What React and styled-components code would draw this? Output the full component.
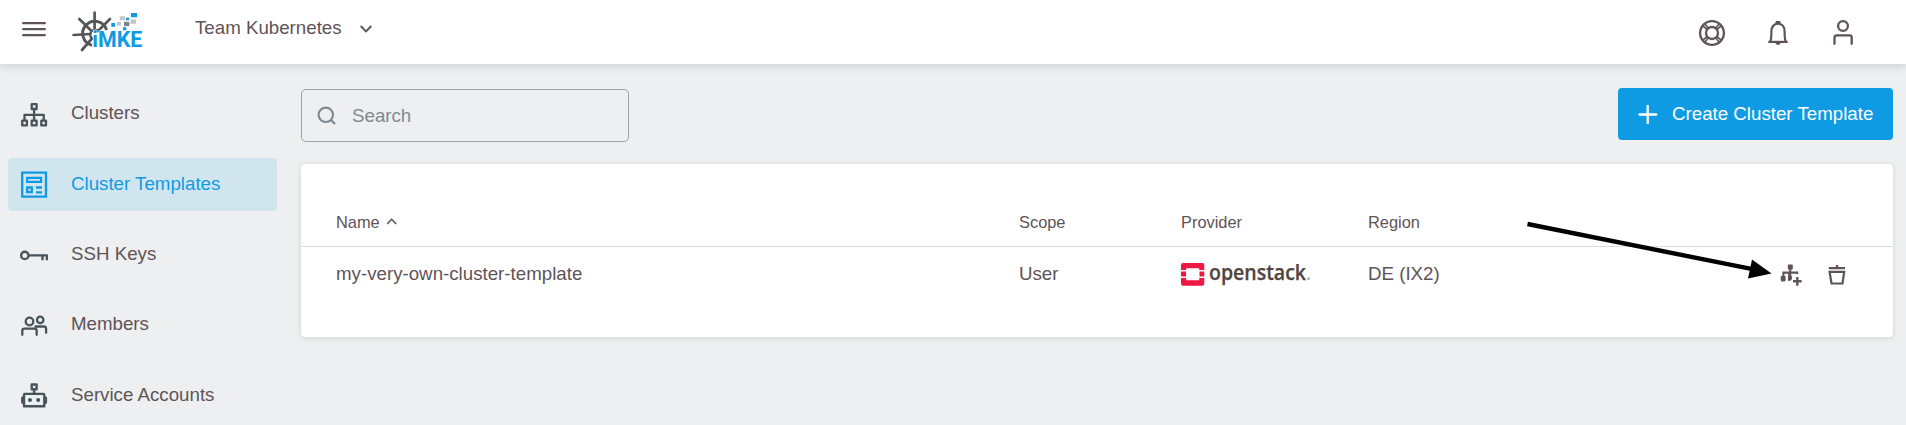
import React from "react";
import styled, { createGlobalStyle } from "styled-components";

const ink = "#5f5358";
const slate = "#48545b";
const blue = "#0f9be3";

const GlobalStyle = createGlobalStyle`
  * { box-sizing: border-box; }
  html, body { margin: 0; padding: 0; }
  body {
    background: #edeff0;
    color: ${ink};
    font-family: "Liberation Sans", Arial, sans-serif;
    font-size: 18.72px;
    line-height: 24px;
    overflow: hidden;
  }
  svg { display: block; flex: none; }
`;

const Page = styled.div`
  height: 425px;
  display: flex;
  flex-direction: column;
  position: relative;
`;

const TopBar = styled.header`
  height: 64px;
  flex: none;
  display: flex;
  align-items: center;
  background: #fff;
  box-shadow: 0 2px 9px rgba(30, 40, 50, 0.16);
  padding: 0 49px 0 22px;
  z-index: 1;
`;

const Logo = styled.div`
  margin-left: 25px;
  display: flex;
`;

const ProjectPicker = styled.div`
  display: flex;
  align-items: center;
  gap: 18px;
  margin-left: 50px;
  height: 56px;
  align-self: flex-start;
`;

const TopActions = styled.div`
  margin-left: auto;
  margin-top: 2px;
  display: flex;
  align-items: center;
  gap: 37.5px;
`;

const Body = styled.div`
  flex: 1;
  display: flex;
`;

const Sidebar = styled.nav`
  width: 277px;
  padding: 24px 0 0 8px;
  display: flex;
  flex-direction: column;
  gap: 17.4px;
`;

const NavItem = styled.a`
  height: 53px;
  flex: none;
  display: flex;
  align-items: center;
  gap: 23px;
  padding-left: 12px;
  border-radius: 4px;
  color: ${(p) => (p.$active ? blue : ink)};
  background: ${(p) => (p.$active ? "#d1e5ee" : "transparent")};
`;

const NavLabel = styled.span`
  margin-top: ${(p) => (p.$active ? "-1px" : "-3px")};
`;

const Main = styled.main`
  flex: 1;
  padding: 24px 13px 0 24px;
`;

const Toolbar = styled.div`
  display: flex;
  justify-content: space-between;
  height: 76px;
`;

const SearchBox = styled.div`
  margin-top: 1px;
  width: 328px;
  height: 53px;
  border: 1px solid #9ba1a6;
  border-radius: 5px;
  display: flex;
  align-items: center;
  gap: 16px;
  padding-left: 15px;
  color: #7f8991;
`;

const CreateButton = styled.button`
  width: 275px;
  height: 52px;
  border: 0;
  border-radius: 4px;
  background: ${blue};
  color: #fff;
  font: inherit;
  display: flex;
  align-items: center;
  gap: 14px;
  padding: 0 0 0 20px;
  white-space: nowrap;
`;

const Card = styled.section`
  height: 173px;
  background: #fff;
  border-radius: 4px;
  padding-top: 35px;
  box-shadow: 0 1px 5px rgba(40, 50, 60, 0.14);
`;

const Row = styled.div`
  display: grid;
  grid-template-columns: 683px 162px 187px 1fr auto;
  align-items: center;
  padding: ${(p) => (p.$head ? "0 44px 2px 35px" : "0 44px 0 35px")};
  height: ${(p) => (p.$head ? "48px" : "54px")};
  font-size: ${(p) => (p.$head ? "16.4px" : "18.72px")};
  border-bottom: ${(p) => (p.$head ? "1px solid #dbdfe2" : "0")};
`;

const Cell = styled.div`
  display: flex;
  align-items: center;
  gap: ${(p) => p.$gap || 0}px;
  white-space: nowrap;
`;

const Annotation = styled.svg`
  position: absolute;
  left: 1520px;
  top: 215px;
  z-index: 2;
  pointer-events: none;
`;

const MenuIcon = () => (
  <svg width="24" height="16" stroke={ink} strokeWidth="2.3" strokeLinecap="round" style={{ marginTop: -6 }}>
    <path d="M1.2 2.2H22.8M1.2 8.2H22.8M1.2 14.2H22.8" />
  </svg>
);

const ImkeLogo = () => (
  <svg width="74" height="44" viewBox="71 10 74 44">
    <g fill="none" stroke="#555657" strokeWidth="3">
      <path d="M92 45.3A12.2 12.2 0 1 1 106.600 30" />
      <path d="M91.5 38A4.6 4.6 0 1 1 99 31.5" strokeWidth="2.3" />
      <path d="M94.6 12.5V29M79.3 19L91 30.5M110 19L98 31M73.5 35L90 34M82 50L92 38.5" strokeWidth="2.7" strokeLinecap="round" />
    </g>
    <text x="92.3" y="47" fill={blue} stroke="#fff" strokeWidth="1" paintOrder="stroke" fontFamily="Roboto, sans-serif" fontWeight="700" fontSize="21.4" textLength="50" lengthAdjust="spacingAndGlyphs">iMKE</text>
    <path fill={blue} d="M131 13h6v4.3h-6zM126 17.8h3v2.4h-3zM111.3 23h3.7v3.7h-3.7zM123 27.3h3.4v2.9H123z" />
    <path fill="#c3c6c8" d="M119.8 16.3h5.4v3.9h-5.4zM117 22h4v3.6h-4zM130.5 19.6h5.5v4.2h-5.5z" />
    <path fill="#7e8487" d="M124 21.8h5.4v4.3H124z" />
  </svg>
);

const ChevronDown = () => (
  <svg width="12" height="8" fill="none" stroke={ink} strokeWidth="1.9" style={{ marginTop: 2 }}>
    <path d="M.7 1L6 6.5L11.3 1" />
  </svg>
);

const HelpIcon = () => (
  <svg width="28" height="28" viewBox="0 0 28 28" fill="none" stroke={ink} strokeWidth="2.3">
    <circle cx="14" cy="14" r="11.9" />
    <circle cx="14" cy="14" r="6" />
    <path d="M4.7 6.8L9.4 10.5M6.8 4.7L10.5 9.4M23.3 6.8L18.6 10.5M21.2 4.7L17.5 9.4M4.7 21.2L9.4 17.5M6.8 23.3L10.5 18.6M23.3 21.2L18.6 17.5M21.2 23.3L17.5 18.6" strokeWidth="1.6" />
  </svg>
);

const BellIcon = () => (
  <svg width="28" height="28" viewBox="0 0 28 28" fill="none" stroke={ink} strokeWidth="2.2">
    <path d="M4.3 22.9H23.7" />
    <path d="M6.3 22.5C7.3 20.5 7.4 18 7.4 12.6C7.4 7.8 10 4.6 14 4.6S20.6 7.8 20.6 12.6C20.6 18 20.7 20.5 21.7 22.5" />
    <path d="M12.2 4L12.6 3.1H15.4L15.8 4M12.4 23.7C12.6 25.2 15.4 25.2 15.6 23.7" />
  </svg>
);

const UserIcon = () => (
  <svg width="28" height="28" viewBox="0 0 28 28" fill="none" stroke={ink} strokeWidth="2.3">
    <circle cx="14" cy="7" r="4.9" />
    <path d="M5.5 24.8V18.5Q5.5 16.3 7.7 16.3H20.5Q22.7 16.3 22.7 18.5V24.8" strokeLinecap="round" />
  </svg>
);

const ClustersIcon = () => (
  <svg width="28" height="28" viewBox="20 100 28 28" fill="none" stroke={slate} strokeWidth="2.3">
    <path d="M31.7 103.2h4.9v4.8h-4.9zM22.2 119.7h4.7v4.7h-4.7zM31.7 119.7h4.9v4.7h-4.9zM41.3 119.7h4.7v4.7h-4.7zM34.1 108v11.8M24.5 119.8v-6H43.7v6" strokeLinejoin="round" />
  </svg>
);

const TemplatesIcon = () => (
  <svg width="28" height="28" viewBox="0 0 28 28" fill="none" stroke={blue} strokeWidth="2.3">
    <path d="M2.2 1.7H26V25.7H2.2zM7.2 6.9H21.1V10.9H7.2zM7.2 16.5H11.8V21.1H7.2zM16 16.5H22M16 21.3H22" />
  </svg>
);

const KeyIcon = () => (
  <svg width="28" height="28" viewBox="0 0 28 28" fill="none" stroke={slate} strokeWidth="2.4">
    <circle cx="4.8" cy="14.4" r="3.7" />
    <path d="M8.6 14.4H27M22.5 14.4V19.2M26.9 13.4V19.2" />
  </svg>
);

const MembersIcon = () => (
  <svg width="28" height="28" viewBox="0 0 28 28" fill="none" stroke={slate} strokeWidth="2.3">
    <circle cx="9.5" cy="9.5" r="3.8" />
    <circle cx="20.2" cy="7.9" r="3.2" />
    <path d="M2.3 22.8V18.8Q2.3 16.6 4.5 16.6H14.5Q16.7 16.6 16.7 18.8V22.8M15.5 14.5H23.9Q26.1 14.5 26.1 16.7V20.8" strokeLinecap="round" />
  </svg>
);

const RobotIcon = () => (
  <svg width="28" height="28" viewBox="0 0 28 28" fill="none" stroke={slate} strokeWidth="2.4">
    <path d="M11.7 2.5h4.9v4.7h-4.9zM14.1 7.5v4.4M4.7 11.9H23.3Q24.3 11.9 24.3 12.9V24.2H4V12.9Q4 11.9 4.7 11.9z" strokeLinejoin="round" />
    <path d="M2.5 15.8v4.8M25.7 15.8v4.8" strokeWidth="2.8" strokeLinecap="round" />
    <circle cx="10" cy="18" r="2" fill={slate} stroke="none" />
    <circle cx="18.2" cy="18" r="2" fill={slate} stroke="none" />
  </svg>
);

const SearchIcon = () => (
  <svg width="19" height="19" viewBox="0 0 19 19" fill="none" stroke="#7f8991" strokeWidth="2.1">
    <circle cx="8.8" cy="8.8" r="7.2" />
    <path d="M14 14L18 18" />
  </svg>
);

const PlusIcon = () => (
  <svg width="20" height="20" stroke="#fff" strokeWidth="2.3" strokeLinecap="round">
    <path d="M1.5 10.5H18.3M9.7 2V19" />
  </svg>
);

const SortIcon = () => (
  <svg width="10" height="7" fill="none" stroke={ink} strokeWidth="1.6">
    <path d="M.2 6L4.7 1.3L9.2 6" />
  </svg>
);

const OpenStackLogo = () => (
  <svg width="132" height="26" viewBox="0 -.8 132 26">
    <path fill="#ed1944" d="M2 1.2H21.3Q23.3 1.200 23.3 3.2V8.2H18.2V6.4H5.2V8.2H0V3.2Q0 1.2 2 1.2zM0 9.7H5V14.800H0zM18.5 9.7H23.3V14.800H18.5zM0 16.2H5.2V18.4H18.2V16.2H23.3V22Q23.3 24 21.3 24H2Q0 24 0 22z" />
    <text x="28" y="17.9" fill="#51443e" stroke="#51443e" strokeWidth=".25" fontFamily="'Open Sans', sans-serif" fontWeight="600" fontSize="21" textLength="97" lengthAdjust="spacingAndGlyphs">openstack</text>
    <circle cx="127.5" cy="17" r="1.3" fill="#a49d99" />
  </svg>
);

const AddClusterIcon = () => (
  <svg width="24" height="24" viewBox="0 0 24 24" fill="none" stroke={ink} strokeWidth="2.1">
    <path d="M11.2 4V16M4.4 15V10.6H18.2V12M10.2 15V11" />
    <path d="M14 19.2H22.6M18.3 15V23.8" strokeWidth="2.4" />
    <path fill={ink} stroke="none" d="M9.4 2.5h3.8l.6.7v3.7l-.7.7H9.500l-.7-.7V3.2zM2.3 14H6l.6.7V18l-.7 1.4H2.4L1.7 18V14.7zM9.2 14H12.9V17L11.7 18.7H8.800z" />
  </svg>
);

const TrashIcon = () => (
  <svg width="24" height="24" viewBox="0 0 24 24" fill="none" stroke={ink} strokeWidth="2.2">
    <path d="M3.8 6.100H20M12 3V6M4.6 9.9H19.2L17.5 21.5H6.5z" />
  </svg>
);

const nav = [
  { label: "Clusters", Icon: ClustersIcon },
  { label: "Cluster Templates", Icon: TemplatesIcon, active: true },
  { label: "SSH Keys", Icon: KeyIcon },
  { label: "Members", Icon: MembersIcon },
  { label: "Service Accounts", Icon: RobotIcon },
];

export default function App() {
  return (
    <Page>
      <GlobalStyle />
      <TopBar>
        <MenuIcon />
        <Logo><ImkeLogo /></Logo>
        <ProjectPicker>
          <span>Team Kubernetes</span>
          <ChevronDown />
        </ProjectPicker>
        <TopActions>
          <HelpIcon />
          <BellIcon />
          <UserIcon />
        </TopActions>
      </TopBar>
      <Body>
        <Sidebar>
          {nav.map(({ label, Icon, active }) => (
            <NavItem key={label} $active={active}>
              <Icon />
              <NavLabel $active={active}>{label}</NavLabel>
            </NavItem>
          ))}
        </Sidebar>
        <Main>
          <Toolbar>
            <SearchBox><SearchIcon /><span>Search</span></SearchBox>
            <CreateButton><PlusIcon /><span>Create Cluster Template</span></CreateButton>
          </Toolbar>
          <Card>
            <Row $head>
              <Cell $gap={7}>Name <SortIcon /></Cell>
              <Cell>Scope</Cell>
              <Cell>Provider</Cell>
              <Cell>Region</Cell>
            </Row>
            <Row>
              <Cell>my-very-own-cluster-template</Cell>
              <Cell>User</Cell>
              <Cell><OpenStackLogo /></Cell>
              <Cell>DE (IX2)</Cell>
              <Cell $gap={22.5}><AddClusterIcon /><TrashIcon /></Cell>
            </Row>
          </Card>
        </Main>
      </Body>
      <Annotation width="260" height="70" viewBox="1520 215 260 70">
        <path d="M1527.5 224L1755 269.7" stroke="#000" strokeWidth="4.4" />
        <path d="M1771.5 273.5L1752 259.5L1748 278.5z" />
      </Annotation>
    </Page>
  );
}
